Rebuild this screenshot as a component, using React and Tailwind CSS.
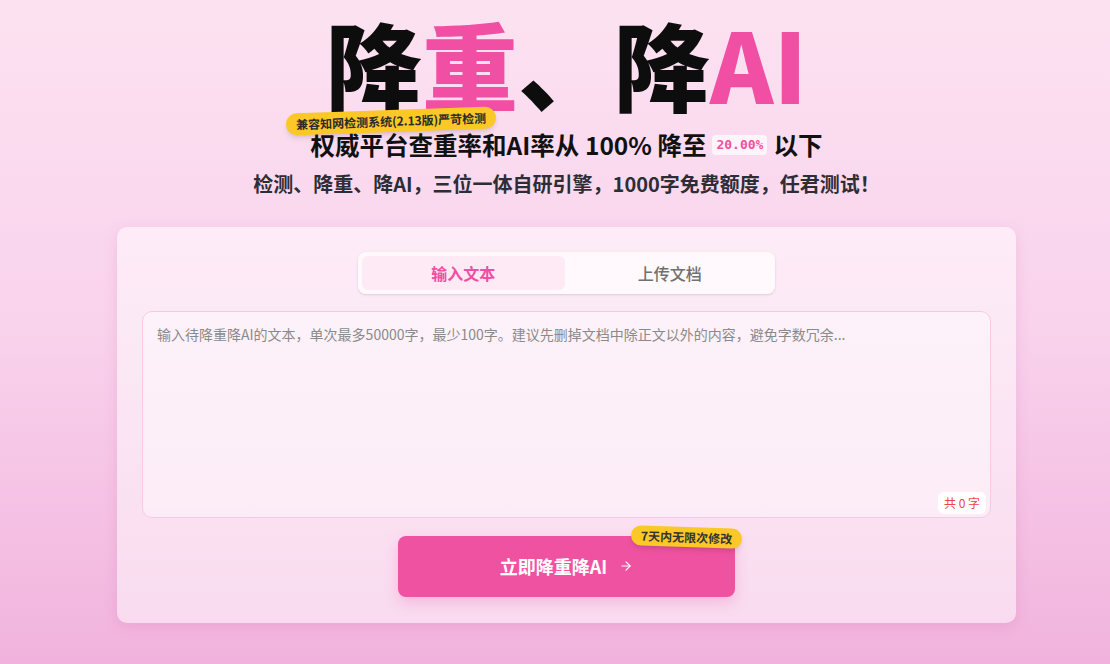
import { useState } from "react"

const CJK = { fontFamily: '"Noto Sans CJK SC", "Noto Sans", sans-serif' }

export default function App() {
  const [tab, setTab] = useState("text")
  const [text, setText] = useState("")

  return (
    <div
      className="min-h-[664px] w-full bg-gradient-to-b from-[#fce2f1] via-[#f9d2ec] to-[#f1b3dd] pl-[23px] pt-[10px] pb-10"
      style={CJK}
    >
      <div className="flex flex-col items-center">
        {/* Title */}
        <h1 className="text-[96px] leading-[1.1] font-black text-[#0d0d0d]">
          降<span className="text-[#f04fa3]">重</span>、降<span className="text-[#f04fa3]">AI</span>
        </h1>

        {/* Subtitle */}
        <div className="relative mt-[13px]">
          <span className="absolute -left-[25px] -top-[19px] -rotate-2 rounded-full bg-[#fbc827] px-2.5 py-[2px] text-[12px] font-bold text-[#2a2a2a] shadow-md whitespace-nowrap">
            兼容知网检测系统(2.13版)严苛检测
          </span>
          <p className="flex items-center text-[24.5px] leading-8 font-bold text-[#111]">
            权威平台查重率和AI率从 100% 降至
            <span
              className="mx-1.5 rounded bg-white/70 px-1 text-[13px] leading-5 font-bold text-[#f04fa3]"
              style={{ fontFamily: '"DejaVu Sans Mono", monospace' }}
            >
              20.00%
            </span>
            以下
          </p>
        </div>
        <p className="mt-[9px] text-[20px] leading-7 font-bold text-[#2d2d35]">
          检测、降重、降AI，三位一体自研引擎，1000字免费额度，任君测试！
        </p>

        {/* Card */}
        <div className="mt-[29px] w-[899px] rounded-[10px] bg-white/50 px-[25px] pt-[25px] pb-[26px] shadow-[0_4px_14px_rgba(200,90,160,0.18)]">
          <div className="mx-auto flex w-[417px] gap-1 rounded-lg bg-white/70 p-1 shadow-sm">
            <button
              onClick={() => setTab("text")}
              className={`h-[34px] flex-1 rounded-md text-[16px] ${
                tab === "text" ? "bg-[#fdeaf5] font-bold text-[#f04fa3]" : "font-medium text-[#707070]"
              }`}
            >
              输入文本
            </button>
            <button
              onClick={() => setTab("file")}
              className={`h-[34px] flex-1 rounded-md text-[16px] ${
                tab === "file" ? "bg-[#fdeaf5] font-bold text-[#f04fa3]" : "font-medium text-[#707070]"
              }`}
            >
              上传文档
            </button>
          </div>

          <div className="relative mt-[17px] h-[207px] rounded-[10px] border border-[#f9c9e3] bg-white/40">
            <textarea
              value={text}
              onChange={(e) => setText(e.target.value)}
              placeholder="输入待降重降AI的文本，单次最多50000字，最少100字。建议先删掉文档中除正文以外的内容，避免字数冗余..."
              className="h-full w-full resize-none bg-transparent px-[14px] py-[10px] text-[14px] leading-6 text-[#333] placeholder:text-[#8a8a8a] outline-none"
            />
            <span className="absolute bottom-[3px] right-[4px] rounded-md bg-white px-1.5 py-[2px] text-[12px] text-[#ef4444]">
              共 {text.length} 字
            </span>
          </div>

          <div className="mt-[18px] flex justify-center">
            <div className="relative">
              <button className="flex h-[61px] w-[337px] items-center justify-center gap-3 rounded-lg bg-[#f052a2] text-[18px] font-bold text-white shadow-[0_6px_14px_rgba(240,82,162,0.25)]">
                立即降重降AI
                <svg width="14" height="14" viewBox="0 0 24 24" fill="none" stroke="currentColor" strokeWidth="2" strokeLinecap="round" strokeLinejoin="round">
                  <path d="M5 12h14" />
                  <path d="m12 5 7 7-7 7" />
                </svg>
              </button>
              <span className="absolute -right-[7px] -top-[9px] rotate-2 rounded-full bg-[#fbc827] px-2.5 py-[1px] text-[12px] font-bold text-[#333] shadow-md whitespace-nowrap">
                7天内无限次修改
              </span>
            </div>
          </div>
        </div>
      </div>
    </div>
  )
}
